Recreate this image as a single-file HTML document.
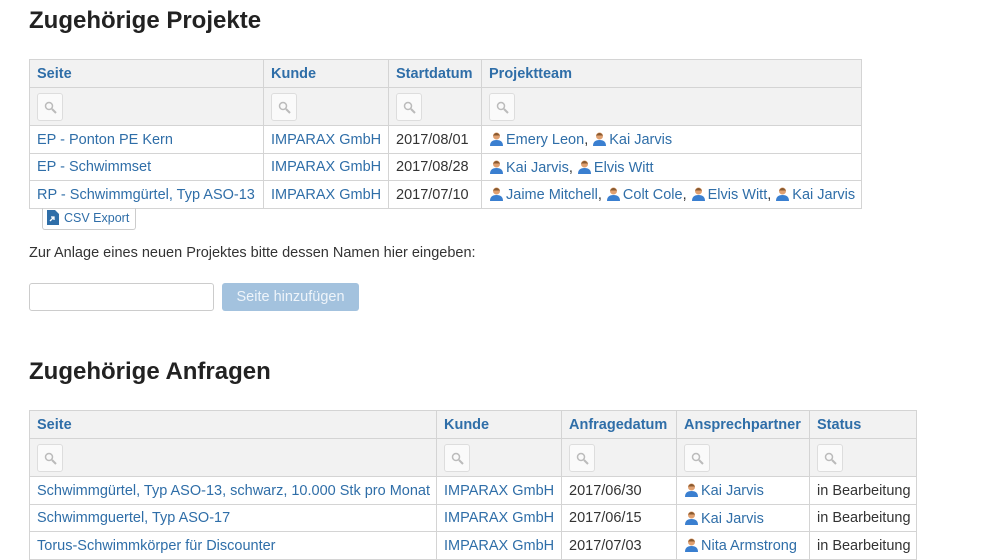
<!DOCTYPE html>
<html><head><meta charset="utf-8"><style>
body{margin:0;background:#fff;font-family:"Liberation Sans",sans-serif;font-size:14.5px;color:#333;width:995px;height:560px;overflow:hidden;position:relative}
h2{position:absolute;left:29px;margin:0;font-size:24px;font-weight:bold;color:#222}
table{position:absolute;left:29px;border-collapse:collapse;table-layout:fixed}
td,th{border:1px solid #d4d4d4;padding:0 7px;white-space:nowrap;overflow:hidden;text-align:left;vertical-align:middle;line-height:16px}
th{background:#f2f2f2;color:#2f6ea8;font-weight:bold;height:27px}
tr.f td{background:#f2f2f2;height:37px}
tr.r td{height:25.5px;padding-top:1px}
a{color:#2f6ea8;text-decoration:none}
.s{display:block;width:24px;height:26px;border:1px solid #ddd;border-radius:3px;background:#fafafa;position:relative}
.s svg{position:absolute;left:6px;top:7px}
.u{display:inline-block;vertical-align:-2px;margin-right:2px}
</style></head><body>
<h2 style="top:7px">Zugehörige Projekte</h2>
<table style="top:59px;width:832px">
<colgroup><col style="width:234px"><col style="width:125px"><col style="width:93px"><col style="width:380px"></colgroup>
<tr><th>Seite</th><th>Kunde</th><th>Startdatum</th><th>Projektteam</th></tr>
<tr class="f"><td><span class="s"><svg width="13" height="13"><circle cx="5" cy="5" r="3.5" fill="none" stroke="#bbb" stroke-width="1.5"/><path d="M8 8l4 4" stroke="#bbb" stroke-width="2"/></svg></span></td><td><span class="s"><svg width="13" height="13"><circle cx="5" cy="5" r="3.5" fill="none" stroke="#bbb" stroke-width="1.5"/><path d="M8 8l4 4" stroke="#bbb" stroke-width="2"/></svg></span></td><td><span class="s"><svg width="13" height="13"><circle cx="5" cy="5" r="3.5" fill="none" stroke="#bbb" stroke-width="1.5"/><path d="M8 8l4 4" stroke="#bbb" stroke-width="2"/></svg></span></td><td><span class="s"><svg width="13" height="13"><circle cx="5" cy="5" r="3.5" fill="none" stroke="#bbb" stroke-width="1.5"/><path d="M8 8l4 4" stroke="#bbb" stroke-width="2"/></svg></span></td></tr>
<tr class="r"><td><a>EP - Ponton PE Kern</a></td><td><a>IMPARAX GmbH</a></td><td>2017/08/01</td><td><a><svg class="u" width="15" height="15"><circle cx="7.5" cy="5" r="3.5" fill="#e0a070"/><path d="M4 4.5q3.5-5 7 0" fill="#8a5a30"/><path d="M1 15q0-6 6.5-6q6.5 0 6.5 6z" fill="#3a7fd0"/></svg>Emery Leon</a>, <a><svg class="u" width="15" height="15"><circle cx="7.5" cy="5" r="3.5" fill="#e0a070"/><path d="M4 4.5q3.5-5 7 0" fill="#8a5a30"/><path d="M1 15q0-6 6.5-6q6.5 0 6.5 6z" fill="#3a7fd0"/></svg>Kai Jarvis</a></td></tr>
<tr class="r"><td><a>EP - Schwimmset</a></td><td><a>IMPARAX GmbH</a></td><td>2017/08/28</td><td><a><svg class="u" width="15" height="15"><circle cx="7.5" cy="5" r="3.5" fill="#e0a070"/><path d="M4 4.5q3.5-5 7 0" fill="#8a5a30"/><path d="M1 15q0-6 6.5-6q6.5 0 6.5 6z" fill="#3a7fd0"/></svg>Kai Jarvis</a>, <a><svg class="u" width="15" height="15"><circle cx="7.5" cy="5" r="3.5" fill="#e0a070"/><path d="M4 4.5q3.5-5 7 0" fill="#8a5a30"/><path d="M1 15q0-6 6.5-6q6.5 0 6.5 6z" fill="#3a7fd0"/></svg>Elvis Witt</a></td></tr>
<tr class="r"><td><a>RP - Schwimmgürtel, Typ ASO-13</a></td><td><a>IMPARAX GmbH</a></td><td>2017/07/10</td><td><a><svg class="u" width="15" height="15"><circle cx="7.5" cy="5" r="3.5" fill="#e0a070"/><path d="M4 4.5q3.5-5 7 0" fill="#8a5a30"/><path d="M1 15q0-6 6.5-6q6.5 0 6.5 6z" fill="#3a7fd0"/></svg>Jaime Mitchell</a>, <a><svg class="u" width="15" height="15"><circle cx="7.5" cy="5" r="3.5" fill="#e0a070"/><path d="M4 4.5q3.5-5 7 0" fill="#8a5a30"/><path d="M1 15q0-6 6.5-6q6.5 0 6.5 6z" fill="#3a7fd0"/></svg>Colt Cole</a>, <a><svg class="u" width="15" height="15"><circle cx="7.5" cy="5" r="3.5" fill="#e0a070"/><path d="M4 4.5q3.5-5 7 0" fill="#8a5a30"/><path d="M1 15q0-6 6.5-6q6.5 0 6.5 6z" fill="#3a7fd0"/></svg>Elvis Witt</a>, <a><svg class="u" width="15" height="15"><circle cx="7.5" cy="5" r="3.5" fill="#e0a070"/><path d="M4 4.5q3.5-5 7 0" fill="#8a5a30"/><path d="M1 15q0-6 6.5-6q6.5 0 6.5 6z" fill="#3a7fd0"/></svg>Kai Jarvis</a></td></tr>
</table>
<div style="position:absolute;left:42px;top:208px;width:92px;height:21px;border:1px solid #ccc;border-top:none;border-radius:0 0 3px 3px;font-size:12.5px;color:#2f6ea8;line-height:21px">
<svg style="position:absolute;left:4px;top:2px" width="12" height="15"><path d="M0 0h8l4 4v11h-12z" fill="#2f6ea8"/><path d="M3 11l4-4M4 7h3v3" stroke="#fff" stroke-width="1.3" fill="none"/></svg>
<span style="position:absolute;left:21px">CSV Export</span></div>
<div style="position:absolute;left:29px;top:245px;font-size:14.5px;color:#333">Zur Anlage eines neuen Projektes bitte dessen Namen hier eingeben:</div>
<div style="position:absolute;left:29px;top:283px;width:183px;height:26px;border:1px solid #ccc;border-radius:3px"></div>
<div style="position:absolute;left:222px;top:283px;width:137px;height:28px;background:#a3c2de;border-radius:3px;color:#eef4fa;text-align:center;line-height:28px;font-size:14.5px">Seite hinzufügen</div>
<h2 style="top:358px">Zugehörige Anfragen</h2>
<table style="top:410px;width:887px">
<colgroup><col style="width:407px"><col style="width:125px"><col style="width:115px"><col style="width:133px"><col style="width:107px"></colgroup>
<tr><th>Seite</th><th>Kunde</th><th>Anfragedatum</th><th>Ansprechpartner</th><th>Status</th></tr>
<tr class="f"><td><span class="s"><svg width="13" height="13"><circle cx="5" cy="5" r="3.5" fill="none" stroke="#bbb" stroke-width="1.5"/><path d="M8 8l4 4" stroke="#bbb" stroke-width="2"/></svg></span></td><td><span class="s"><svg width="13" height="13"><circle cx="5" cy="5" r="3.5" fill="none" stroke="#bbb" stroke-width="1.5"/><path d="M8 8l4 4" stroke="#bbb" stroke-width="2"/></svg></span></td><td><span class="s"><svg width="13" height="13"><circle cx="5" cy="5" r="3.5" fill="none" stroke="#bbb" stroke-width="1.5"/><path d="M8 8l4 4" stroke="#bbb" stroke-width="2"/></svg></span></td><td><span class="s"><svg width="13" height="13"><circle cx="5" cy="5" r="3.5" fill="none" stroke="#bbb" stroke-width="1.5"/><path d="M8 8l4 4" stroke="#bbb" stroke-width="2"/></svg></span></td><td><span class="s"><svg width="13" height="13"><circle cx="5" cy="5" r="3.5" fill="none" stroke="#bbb" stroke-width="1.5"/><path d="M8 8l4 4" stroke="#bbb" stroke-width="2"/></svg></span></td></tr>
<tr class="r"><td><a>Schwimmgürtel, Typ ASO-13, schwarz, 10.000 Stk pro Monat</a></td><td><a>IMPARAX GmbH</a></td><td>2017/06/30</td><td><a><svg class="u" width="15" height="15"><circle cx="7.5" cy="5" r="3.5" fill="#e0a070"/><path d="M4 4.5q3.5-5 7 0" fill="#8a5a30"/><path d="M1 15q0-6 6.5-6q6.5 0 6.5 6z" fill="#3a7fd0"/></svg>Kai Jarvis</a></td><td>in Bearbeitung</td></tr>
<tr class="r"><td><a>Schwimmguertel, Typ ASO-17</a></td><td><a>IMPARAX GmbH</a></td><td>2017/06/15</td><td><a><svg class="u" width="15" height="15"><circle cx="7.5" cy="5" r="3.5" fill="#e0a070"/><path d="M4 4.5q3.5-5 7 0" fill="#8a5a30"/><path d="M1 15q0-6 6.5-6q6.5 0 6.5 6z" fill="#3a7fd0"/></svg>Kai Jarvis</a></td><td>in Bearbeitung</td></tr>
<tr class="r"><td><a>Torus-Schwimmkörper für Discounter</a></td><td><a>IMPARAX GmbH</a></td><td>2017/07/03</td><td><a><svg class="u" width="15" height="15"><circle cx="7.5" cy="5" r="3.5" fill="#e0a070"/><path d="M4 4.5q3.5-5 7 0" fill="#8a5a30"/><path d="M1 15q0-6 6.5-6q6.5 0 6.5 6z" fill="#3a7fd0"/></svg>Nita Armstrong</a></td><td>in Bearbeitung</td></tr>
</table>
</body></html>
